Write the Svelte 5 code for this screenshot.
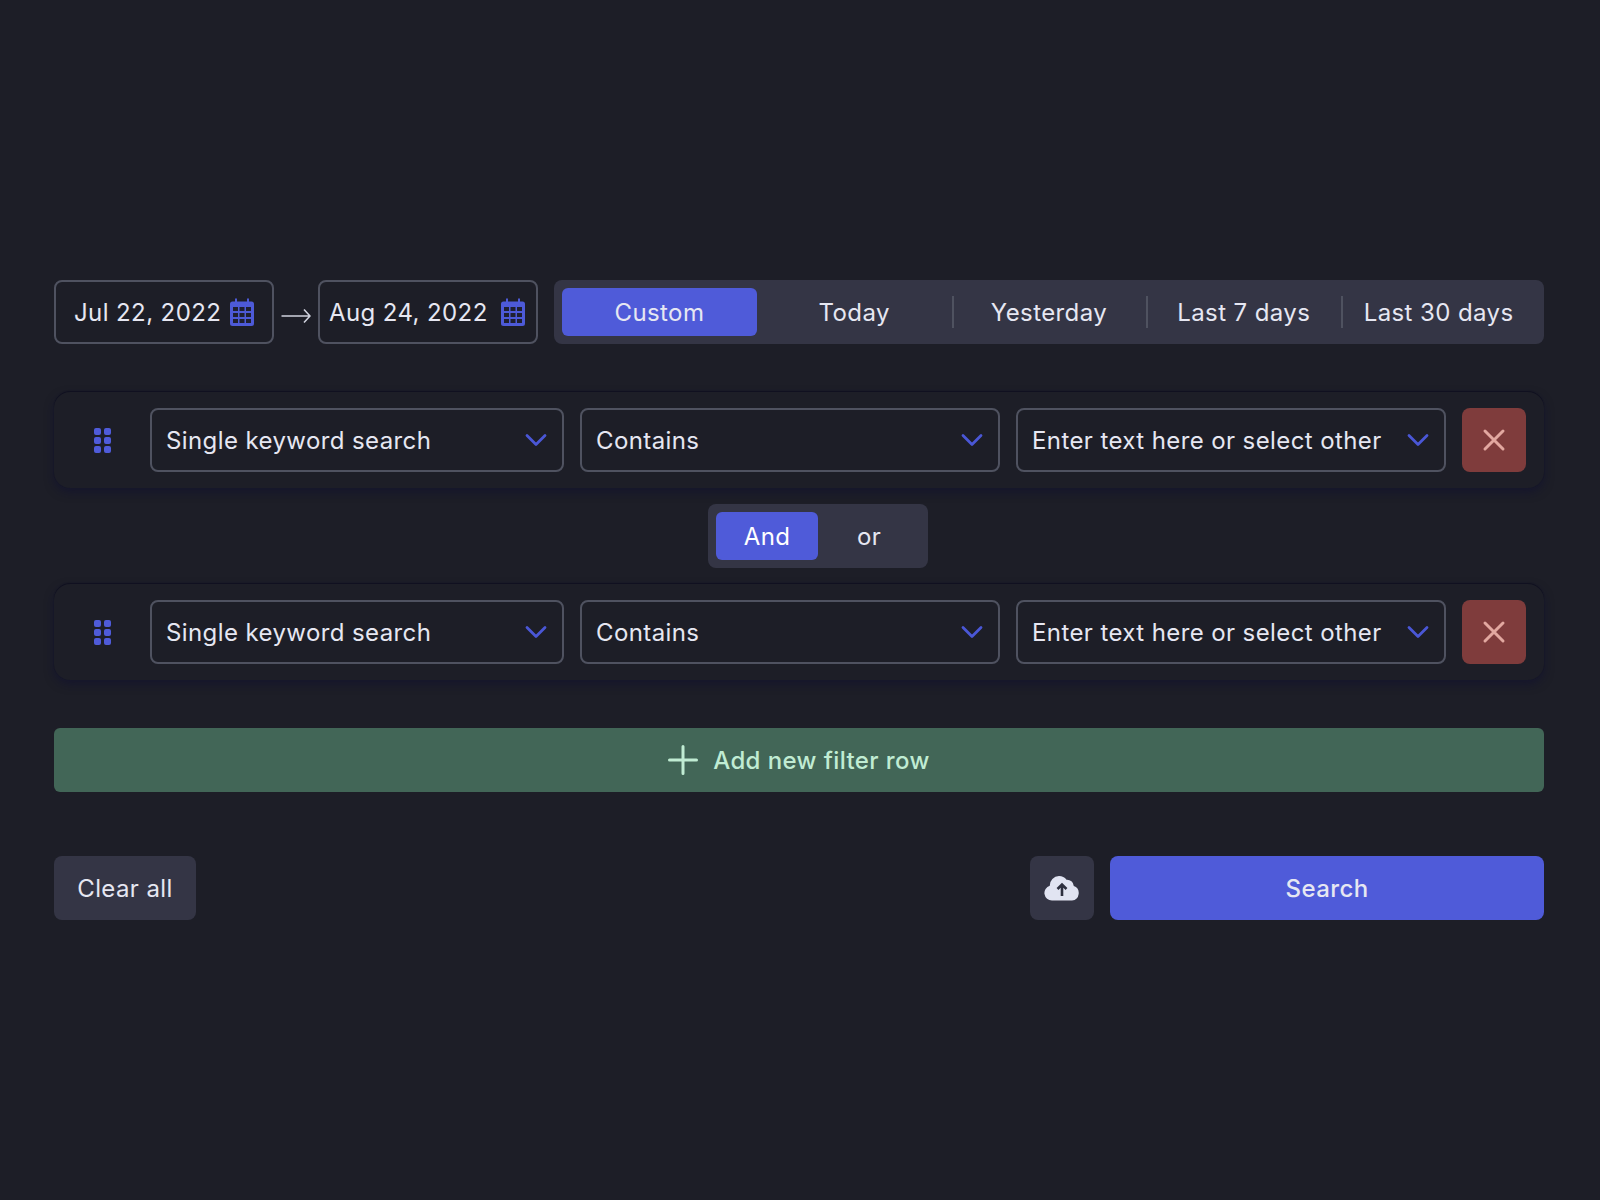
<script lang="ts">
  const ranges = ['Today', 'Yesterday', 'Last 7 days', 'Last 30 days'];
  const filterRows = [
    { field: 'Single keyword search', op: 'Contains', value: 'Enter text here or select other' },
    { field: 'Single keyword search', op: 'Contains', value: 'Enter text here or select other' }
  ];
</script>

{#snippet calendar()}
  <svg class="calendar" viewBox="0 0 24 28" width="24" height="28" aria-hidden="true">
    <path fill="#4d5ad8" d="M5 0.5h2v3h10v-3h2v3h2.5A2.5 2.5 0 0 1 24 6v19.5a2.5 2.5 0 0 1-2.5 2.5h-19A2.5 2.5 0 0 1 0 25.500V6a2.500 2.500 0 0 1 2.500-2.500H5z" />
    <g fill="#1f2030">
      <rect x="3" y="9" width="5" height="4" />
      <rect x="9.500" y="9" width="5" height="4" />
      <rect x="16" y="9" width="5" height="4" />
      <rect x="3" y="15" width="5" height="4" />
      <rect x="9.500" y="15" width="5" height="4" />
      <rect x="16" y="15" width="5" height="4" />
      <rect x="3" y="21" width="5" height="4" />
      <rect x="9.500" y="21" width="5" height="4" />
      <rect x="16" y="21" width="5" height="4" />
    </g>
  </svg>
{/snippet}

{#snippet chevron()}
  <svg class="chevron" viewBox="0 0 22 14" width="22" height="14" aria-hidden="true">
    <path d="M2 2.500 11 11.500 20 2.500" fill="none" stroke="#4a57d6" stroke-width="2.800" stroke-linecap="round" stroke-linejoin="round" />
  </svg>
{/snippet}

<main class="page">
  <div class="date-row">
    <div class="date-box first">
      <span>Jul 22, 2022</span>
      {@render calendar()}
    </div>
    <svg class="arrow" viewBox="0 0 30 16" width="30" height="16" aria-hidden="true">
      <path d="M0.500 8H29M23 1.500 29 8 23 14.500" fill="none" stroke="#d0d2de" stroke-width="1.600" />
    </svg>
    <div class="date-box second">
      <span>Aug 24, 2022</span>
      {@render calendar()}
    </div>
    <div class="range-tabs">
      <button type="button" class="range active">Custom</button>
      {#each ranges as label, i}
        <button type="button" class="range" class:divided={i > 0}>{label}</button>
      {/each}
    </div>
  </div>

  <section class="filters">
    {#each filterRows as row, i}
      {#if i > 0}
        <div class="logic">
          <button type="button" class="logic-btn active">And</button>
          <button type="button" class="logic-btn">or</button>
        </div>
      {/if}
      <div class="filter-row">
        <div class="handle" aria-hidden="true">
          {#each Array(6) as _}<span></span>{/each}
        </div>
        <div class="select field"><span>{row.field}</span>{@render chevron()}</div>
        <div class="select op"><span>{row.op}</span>{@render chevron()}</div>
        <div class="select value"><span>{row.value}</span>{@render chevron()}</div>
        <button type="button" class="remove" aria-label="Remove row">
          <svg viewBox="0 0 24 24" width="24" height="24" aria-hidden="true">
            <path d="M3 3 21 21M21 3 3 21" fill="none" stroke="#e2a8a0" stroke-width="3" stroke-linecap="round" />
          </svg>
        </button>
      </div>
    {/each}
  </section>

  <button type="button" class="add-row">
    <svg viewBox="0 0 30 30" width="30" height="30" aria-hidden="true">
      <path d="M15 1.500V28.500M1.500 15H28.500" fill="none" stroke="#c0ecd3" stroke-width="3" stroke-linecap="round" />
    </svg>
    <span>Add new filter row</span>
  </button>

  <div class="footer">
    <button type="button" class="clear">Clear all</button>
    <div class="footer-right">
      <button type="button" class="upload" aria-label="Upload">
        <svg viewBox="0 0 36 26" width="36" height="26" aria-hidden="true">
          <path fill="#e1e4f2" d="M8 25.500A7.500 7.500 0 0 1 5.800 10.800 9.500 9.500 0 0 1 15 1a9.300 9.300 0 0 1 7.500 3.700A6.800 6.800 0 0 1 29.800 11 7.500 7.500 0 0 1 28 25.500z" />
          <path d="M18 21V9.500M13.500 14 18 9.500 22.500 14" fill="none" stroke="#2e3040" stroke-width="2.600" />
        </svg>
      </button>
      <button type="button" class="search">Search</button>
    </div>
  </div>
</main>

<style>
  :global(body) {
    margin: 0;
    background: #1d1e27;
  }

  .page {
    box-sizing: border-box;
    width: 1600px;
    height: 1200px;
    padding: 280px 56px 280px 54px;
    display: flex;
    flex-direction: column;
    font-family: Inter, "Open Sans", sans-serif;
    font-size: 24px;
    letter-spacing: 0.4px;
    color: #e6e7f2;
  }

  button {
    border: 0;
    margin: 0;
    padding: 0;
    font: inherit;
    letter-spacing: inherit;
    color: inherit;
    cursor: pointer;
  }

  .date-row {
    display: flex;
    height: 64px;
  }

  .date-box {
    box-sizing: border-box;
    width: 220px;
    display: flex;
    align-items: center;
    justify-content: space-between;
    border: 2px solid #4f5260;
    border-radius: 8px;
  }

  .date-box.first {
    padding: 0 18px 0 18px;
  }

  .date-box.second {
    padding: 0 11px 0 9px;
  }

  .arrow {
    width: 30px;
    margin: 28px 7px 0 7px;
  }

  .range-tabs {
    flex: 1;
    margin-left: 16px;
    padding: 8px;
    display: grid;
    grid-template-columns: repeat(5, 1fr);
    background: #343545;
    border-radius: 8px;
  }

  .range {
    position: relative;
    background: none;
    border-radius: 6px;
  }

  .range.active {
    background: #4f5bd9;
  }

  .range.divided::before {
    content: '';
    position: absolute;
    left: 0;
    top: 8px;
    bottom: 8px;
    width: 2px;
    background: #4f5260;
  }

  .filters {
    margin-top: 48px;
    display: flex;
    flex-direction: column;
  }

  .filter-row {
    display: flex;
    align-items: center;
    height: 96px;
    box-sizing: border-box;
    padding: 0 18px 0 0;
    border-radius: 16px;
    background: #1d1e27;
    box-shadow: 0 -1px 1px rgba(10, 10, 28, 0.7), 0 4px 10px rgba(14, 15, 50, 0.55);
  }

  .handle {
    width: 96px;
    display: grid;
    grid-template-columns: 7px 7px;
    grid-auto-rows: 7px;
    gap: 2px 3px;
    justify-content: center;
  }

  .handle span {
    background: #4f5bd9;
    border-radius: 2px;
  }

  .select {
    box-sizing: border-box;
    height: 64px;
    display: flex;
    align-items: center;
    justify-content: space-between;
    padding: 0 15px 0 14px;
    border: 2px solid #4f5260;
    border-radius: 8px;
    white-space: nowrap;
  }

  .field {
    width: 414px;
  }

  .op {
    width: 420px;
    margin-left: 16px;
  }

  .value {
    width: 430px;
    margin-left: 16px;
  }

  .remove {
    width: 64px;
    height: 64px;
    margin-left: 16px;
    display: grid;
    place-items: center;
    background: #7f3c3c;
    border-radius: 8px;
  }

  .logic {
    align-self: flex-start;
    margin: 16px 0 16px 654px;
    box-sizing: border-box;
    width: 220px;
    height: 64px;
    padding: 8px;
    display: grid;
    grid-template-columns: 1fr 1fr;
    background: #343545;
    border-radius: 8px;
  }

  .logic-btn {
    background: none;
    border-radius: 6px;
  }

  .logic-btn.active {
    background: #4f5bd9;
    color: #fff;
  }

  .add-row {
    margin-top: 48px;
    height: 64px;
    display: flex;
    align-items: center;
    justify-content: center;
    gap: 15px;
    background: #426657;
    color: #c0ecd3;
    border-radius: 6px;
    font-weight: 500;
  }

  .footer {
    margin-top: 64px;
    display: flex;
    justify-content: space-between;
  }

  .footer-right {
    display: flex;
    gap: 16px;
  }

  .clear {
    width: 142px;
    height: 64px;
    background: #343545;
    border-radius: 8px;
  }

  .upload {
    width: 64px;
    height: 64px;
    display: grid;
    place-items: center;
    background: #343545;
    border-radius: 8px;
  }

  .search {
    width: 434px;
    height: 64px;
    background: #4f5bd9;
    border-radius: 8px;
    font-weight: 500;
  }
</style>
